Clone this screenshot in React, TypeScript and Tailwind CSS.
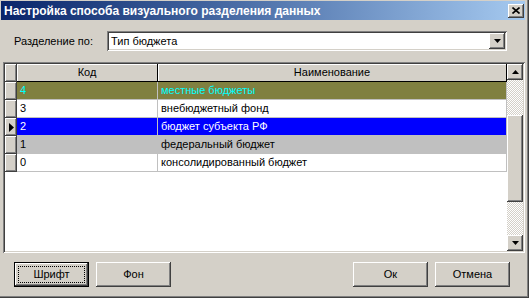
import React from 'react'

const raised =
  'shadow-[inset_-1px_-1px_#404040,inset_1px_1px_#ffffff,inset_-2px_-2px_#808080,inset_2px_2px_#d4d0c8]'
const sunken =
  'shadow-[inset_1px_1px_#808080,inset_-1px_-1px_#ffffff,inset_2px_2px_#404040,inset_-2px_-2px_#d4d0c8]'

const rows = [
  { code: '4', name: 'местные бюджеты', bg: 'bg-[#808040]', text: 'text-[#00ffff]' },
  { code: '3', name: 'внебюджетный фонд', bg: 'bg-white', text: 'text-black' },
  { code: '2', name: 'бюджет субъекта РФ', bg: 'bg-[#0000ff]', text: 'text-white', current: true },
  { code: '1', name: 'федеральный бюджет', bg: 'bg-[#c0c0c0]', text: 'text-black' },
  { code: '0', name: 'консолидированный бюджет', bg: 'bg-white', text: 'text-black' },
]

const Arrow = ({ up }: { up?: boolean }) => (
  <svg width="7" height="4" viewBox="0 0 7 4">
    <polygon points={up ? '3.5,0 7,4 0,4' : '0,0 7,0 3.5,4'} fill="#000" />
  </svg>
)

const Button = ({ label, isDefault }: { label: string; isDefault?: boolean }) =>
  isDefault ? (
    <button className="w-[75px] h-[25px] border border-black bg-[#d4d0c8] p-0">
      <div className={`w-full h-full ${raised} p-[3px]`}>
        <div className="w-full h-full border border-dotted border-black flex items-center justify-center text-[11px] text-black">
          {label}
        </div>
      </div>
    </button>
  ) : (
    <button
      className={`w-[75px] h-[25px] bg-[#d4d0c8] ${raised} flex items-center justify-center text-[11px] text-black`}
    >
      {label}
    </button>
  )

export default function App() {
  return (
    <div className="w-[529px] h-[298px] bg-[#d4d0c8] pl-px pt-px pr-[4px] pb-[4px] shadow-[inset_-1px_-1px_#404040,inset_-2px_-2px_#808080] flex flex-col font-['Liberation_Sans',Arial,sans-serif] overflow-hidden">
      {/* Title bar */}
      <div className="h-[19px] bg-gradient-to-r from-[#0a246a] to-[#a6caf0] flex items-center justify-between pl-[3px] pr-[1px]">
        <span className="text-white font-bold text-[12px] leading-none">
          Настройка способа визуального разделения данных
        </span>
        <div className={`w-[16px] h-[14px] bg-[#d4d0c8] ${raised} flex items-center justify-center`}>
          <svg width="8" height="7" viewBox="0 0 8 7">
            <path d="M0.5 0.5 L7.5 6.5 M7.5 0.5 L0.5 6.5" stroke="#000" strokeWidth="1.6" />
          </svg>
        </div>
      </div>

      {/* Partition selector */}
      <div className="flex items-center mt-[11px] ml-[13px]">
        <span className="w-[93px] text-[11px] text-black">Разделение по:</span>
        <div className={`w-[400px] h-[20px] bg-white ${sunken} flex items-center justify-between pl-[4px] pr-[2px]`}>
          <span className="text-[11px] text-black">Тип бюджета</span>
          <div className={`w-[16px] h-[16px] bg-[#d4d0c8] ${raised} flex items-center justify-center`}>
            <Arrow />
          </div>
        </div>
      </div>

      {/* Grid */}
      <div className={`mt-[11px] ml-[2px] h-[191px] bg-white ${sunken} p-[2px] flex`}>
        <div className="flex-1 flex flex-col">
          {/* Header */}
          <div className="flex h-[18px]">
            <div className={`w-[12px] bg-[#d4d0c8] ${raised}`} />
            <div className="w-[141px] bg-[#d4d0c8] border-r border-b border-black shadow-[inset_1px_1px_#ffffff] flex items-center justify-center text-[11px] text-black">
              Код
            </div>
            <div className="flex-1 bg-[#d4d0c8] border-r border-b border-black shadow-[inset_1px_1px_#ffffff] flex items-center justify-center text-[11px] text-black">
              Наименование
            </div>
          </div>
          {rows.map((r) => (
            <div key={r.code} className="flex h-[18px]">
              <div className={`w-[12px] bg-[#d4d0c8] ${raised} flex items-center justify-center`}>
                {r.current && (
                  <svg width="5" height="9" viewBox="0 0 5 9">
                    <polygon points="0,0 5,4.5 0,9" fill="#000" />
                  </svg>
                )}
              </div>
              <div
                className={`w-[141px] ${r.bg} ${r.text} border-r border-b border-[#c0c0c0] flex items-center pl-[3px] text-[11px]`}
              >
                {r.code}
              </div>
              <div
                className={`flex-1 ${r.bg} ${r.text} border-r border-b border-[#c0c0c0] flex items-center pl-[3px] text-[11px]`}
              >
                {r.name}
              </div>
            </div>
          ))}
          <div className="flex-1 bg-white" />
        </div>

        {/* Scrollbar */}
        <div className="w-[16px] flex flex-col bg-[image:repeating-conic-gradient(#ffffff_0%_25%,#d4d0c8_0%_50%)] bg-[length:2px_2px]">
          <div className={`h-[16px] bg-[#d4d0c8] ${raised} flex items-center justify-center`}>
            <Arrow up />
          </div>
          <div className="h-[35px]" />
          <div className={`h-[87px] bg-[#d4d0c8] ${raised}`} />
          <div className="flex-1" />
          <div className={`h-[16px] bg-[#d4d0c8] ${raised} flex items-center justify-center`}>
            <Arrow />
          </div>
        </div>
      </div>

      {/* Buttons */}
      <div className="flex items-center mt-[9px] ml-[13px] mr-[15px]">
        <div className="flex gap-[7px]">
          <Button label="Шрифт" isDefault />
          <Button label="Фон" />
        </div>
        <div className="flex gap-[7px] ml-auto">
          <Button label="Ок" />
          <Button label="Отмена" />
        </div>
      </div>
    </div>
  )
}
